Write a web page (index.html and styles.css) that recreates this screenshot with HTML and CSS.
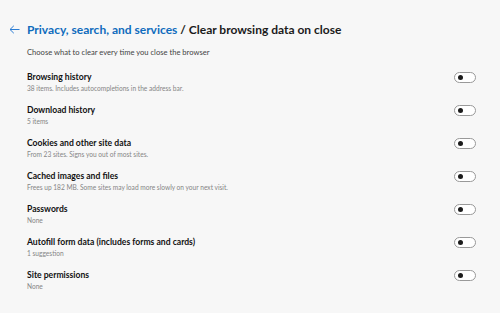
FILE: index.html
```html
<!DOCTYPE html>
<html lang="en">
<head>
    <meta charset="UTF-8">
    <meta name="viewport" content="width=device-width, initial-scale=1.0">
    <title>Clear browsing data on close</title>
    <link rel="stylesheet" href="styles.css">
</head>
<body>
    <div class="page">
        <div class="page-header">
            <svg class="back" width="11" height="9" viewBox="0 0 11 9">
                <path d="M10.5 4.5H1M4.8 0.8L1 4.5l3.8 3.7" fill="none" stroke="#2b7cd3" stroke-width="1"/>
            </svg>
            <h1><span class="crumb">Privacy, search, and services</span> / Clear browsing data on close</h1>
        </div>
        <p class="intro">Choose what to clear every time you close the browser</p>

        <div class="settings-list">
            <div class="setting">
                <div class="setting-text">
                    <div class="setting-title">Browsing history</div>
                    <div class="setting-desc">38 items. Includes autocompletions in the address bar.</div>
                </div>
                <span class="toggle"></span>
            </div>
            <div class="setting">
                <div class="setting-text">
                    <div class="setting-title">Download history</div>
                    <div class="setting-desc">5 items</div>
                </div>
                <span class="toggle"></span>
            </div>
            <div class="setting">
                <div class="setting-text">
                    <div class="setting-title">Cookies and other site data</div>
                    <div class="setting-desc">From 23 sites. Signs you out of most sites.</div>
                </div>
                <span class="toggle"></span>
            </div>
            <div class="setting">
                <div class="setting-text">
                    <div class="setting-title">Cached images and files</div>
                    <div class="setting-desc">Frees up 182 MB. Some sites may load more slowly on your next visit.</div>
                </div>
                <span class="toggle"></span>
            </div>
            <div class="setting">
                <div class="setting-text">
                    <div class="setting-title">Passwords</div>
                    <div class="setting-desc">None</div>
                </div>
                <span class="toggle"></span>
            </div>
            <div class="setting">
                <div class="setting-text">
                    <div class="setting-title">Autofill form data (includes forms and cards)</div>
                    <div class="setting-desc">1 suggestion</div>
                </div>
                <span class="toggle"></span>
            </div>
            <div class="setting">
                <div class="setting-text">
                    <div class="setting-title">Site permissions</div>
                    <div class="setting-desc">None</div>
                </div>
                <span class="toggle"></span>
            </div>
        </div>
    </div>
</body>
</html>
```

FILE: styles.css
```css
body {
    font-family: Lato, "Open Sans", Arial, sans-serif;
    background-color: #f7f7f7;
    margin: 0;
    color: #1b1b1b;
}
.page {
    padding: 20px 24px 0 9px;
}
.page-header {
    display: flex;
    align-items: center;
    gap: 7px;
    height: 18px;
}
.page-header h1 {
    margin: 0;
    font-size: 12px;
    font-weight: 700;
    color: #1b1b1b;
}
.page-header .crumb {
    color: #0f6cbd;
}
.intro {
    margin: 9px 0 0 18px;
    font-size: 7.6px;
    color: #444;
}
.settings-list {
    margin: 8px 0 0 18px;
}
.setting {
    display: flex;
    justify-content: space-between;
    align-items: flex-start;
    height: 33px;
    padding-top: 7px;
    box-sizing: border-box;
}
.setting-title {
    font-size: 8.6px;
    font-weight: 700;
    color: #111;
}
.setting-desc {
    margin-top: 2px;
    font-size: 6.6px;
    color: #858585;
}
.toggle {
    position: relative;
    width: 20px;
    height: 9px;
    border: 1px solid #999;
    border-radius: 6px;
    background-color: #fff;
}
.toggle::after {
    content: "";
    position: absolute;
    left: 3px;
    top: 2px;
    width: 5px;
    height: 5px;
    border-radius: 50%;
    background-color: #1b1b1b;
}
```
